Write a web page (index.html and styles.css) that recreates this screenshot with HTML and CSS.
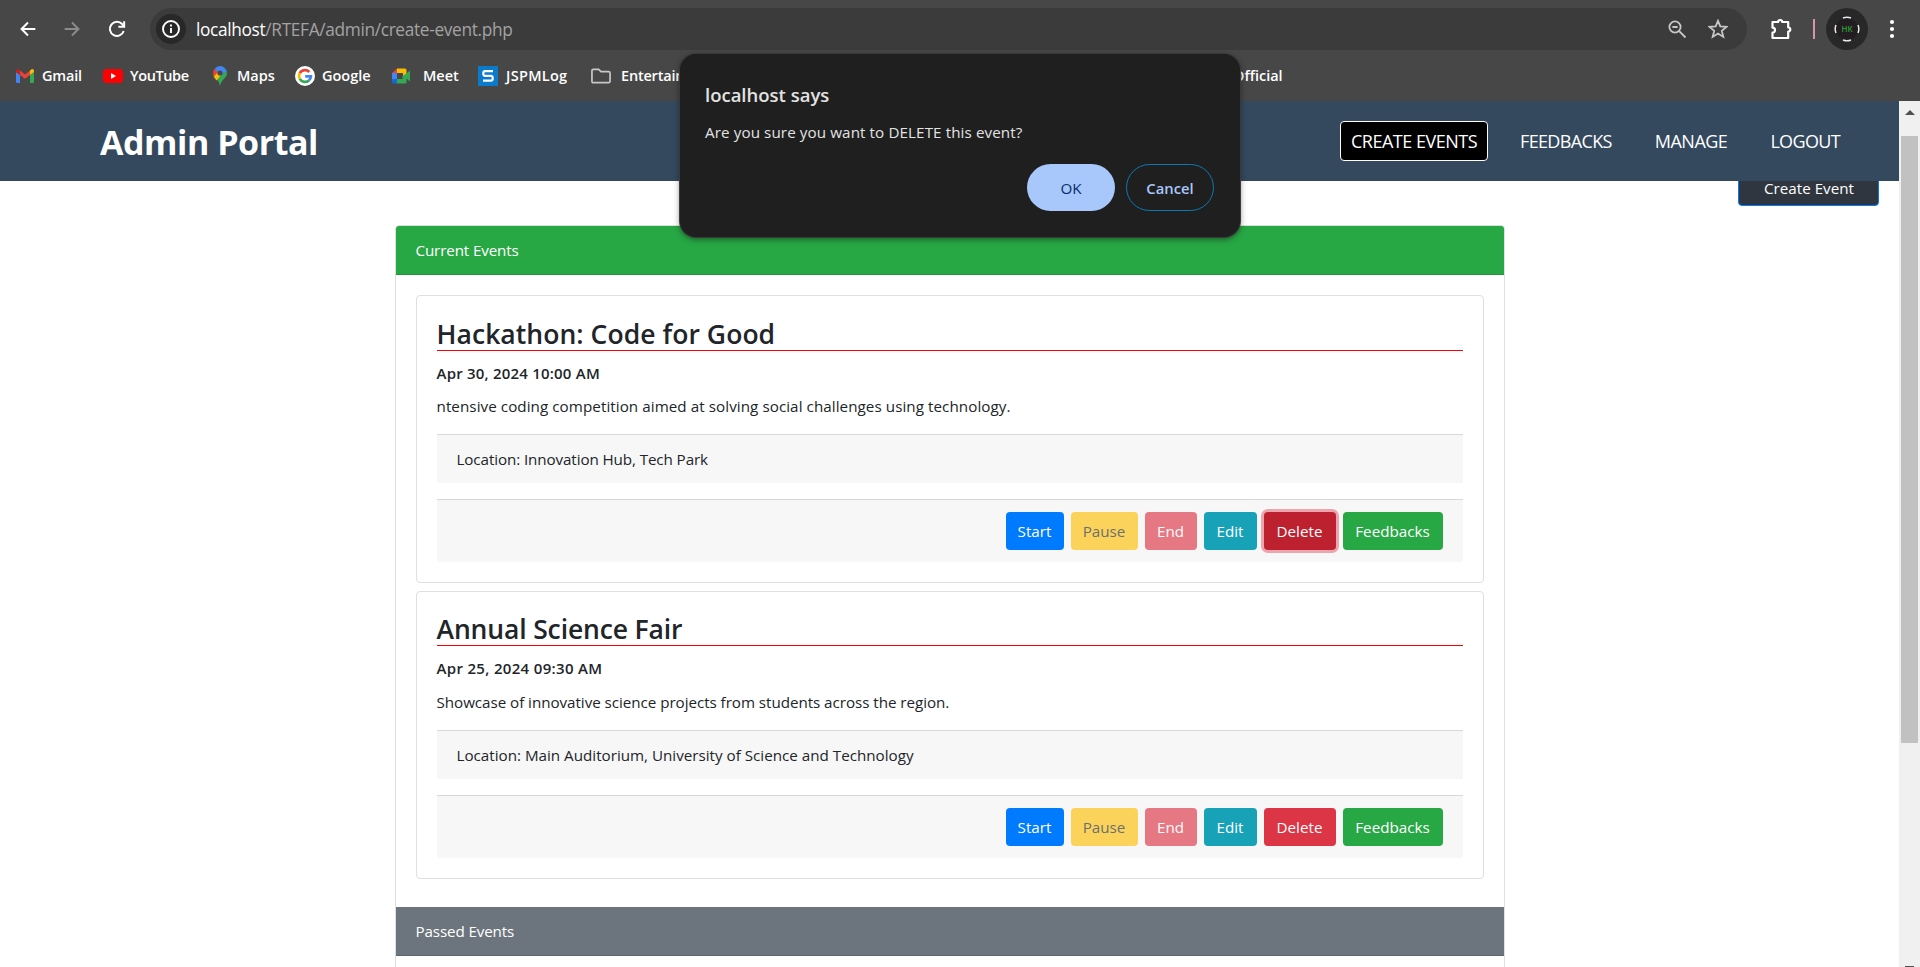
FILE: index.html
```html
<!DOCTYPE html>
<html lang="en">
<head>
<meta charset="utf-8">
<title>Admin Portal</title>
<link rel="stylesheet" href="styles.css">
</head>
<body>
<div class="browser">
  <div class="toolbar">
    <svg class="nav-icon back" viewBox="0 0 24 24"><path d="M20 12H5M12 5l-7 7 7 7"/></svg>
    <svg class="nav-icon forward" viewBox="0 0 24 24"><path d="M4 12h15M12 5l7 7-7 7"/></svg>
    <svg class="nav-icon reload" viewBox="0 0 24 24"><path d="M19.300 14.200A7.700 7.700 0 1 1 17.600 6.600L19.300 8.600"/><path d="M19.800 3.500v6h-6.300"/></svg>
    <div class="omnibox">
      <span class="info"><svg viewBox="0 0 20 20"><circle cx="10" cy="10" r="8"/><path d="M10 9v5M10 5.600v2"/></svg></span>
      <span class="url"><b>localhost</b>/RTEFA/admin/create-event.php</span>
      <svg class="omni-icon zoom-out" viewBox="0 0 20 20"><circle cx="8" cy="8" r="5.600"/><path d="M12.200 12.200L18.500 18.500M5.400 8h5.200"/></svg>
      <svg class="omni-icon star" viewBox="0 0 20 20"><path d="M10 1.800l2.300 5.600 6.200.5-4.700 4 1.500 6-5.300-3.300-5.300 3.300 1.500-6-4.700-4 6.200-.5z"/></svg>
    </div>
    <svg class="ext" viewBox="0 0 24 24"><path d="M3.500 5H9.200a2 2 0 0 1 4 0h6v5.500a2 2 0 0 1 0 4.200v6.300H3.500v-5.300a2.500 2.500 0 0 0 0-5z"/></svg>
    <i class="divider"></i>
    <span class="avatar">
      <svg class="avatar-ring" viewBox="0 0 26 26"><circle cx="13" cy="13" r="11" fill="#211d20" stroke="none"/><path d="M9 2Q13 .4 17 2M9 24Q13 25.600 17 24M2 9Q.4 13 2 17M24 9Q25.600 13 24 17"/></svg>
      <span class="avatar-text">HK</span>
    </span>
    <svg class="dots" viewBox="0 0 6 20"><circle cx="3" cy="3" r="2.100"/><circle cx="3" cy="10" r="2.100"/><circle cx="3" cy="17" r="2.100"/></svg>
  </div>
  <div class="bookmarks">
    <span class="bm gmail"><svg viewBox="0 0 20 20"><path fill="#4285f4" d="M1 6l4 3v8H2.300Q1 17 1 15.700z"/><path fill="#34a853" d="M15 9l4-3v9.700q0 1.300-1.300 1.300H15z"/><path fill="#ea4335" d="M5 9V4.600l5 3.800 5-3.800V9l-5 3.800z"/><path fill="#c5221f" d="M1 6V5q0-2 2-2l2 1.600V9z"/><path fill="#fbbc04" d="M19 6V5q0-2-2-2l-2 1.600V9z"/></svg><span>Gmail</span></span>
    <span class="bm youtube"><svg viewBox="0 0 20 20"><rect y="3" width="20" height="14" rx="3.500" fill="#f00"/><path fill="#fff" d="M8 7l5 3-5 3z"/></svg><span>YouTube</span></span>
    <span class="bm"><svg viewBox="0 0 20 20"><path fill="#34a853" d="M10 20Q9.600 16 6 12L14 2.400Q17 4 17 7.200C17 12 11.500 13 10 20z"/><path fill="#fbbc04" d="M3.500 9.500L10 3l3 3.500-6.500 8Q4.200 12 3.500 9.500z"/><path fill="#ea4335" d="M4.600 2.800L8 6 4 10.500Q2 6 4.600 2.800z"/><path fill="#4285f4" d="M4.600 2.800Q9-2 14 1.500 16 3 16.700 5.500L10 9z"/><circle cx="10" cy="7" r="2.600" fill="#474747"/></svg><span>Maps</span></span>
    <span class="bm"><svg viewBox="0 0 20 20"><circle cx="10" cy="10" r="10" fill="#fff"/><g fill="none" stroke-width="2.700"><path stroke="#ea4335" d="M4.800 7.200A5.900 5.900 0 0 1 14.300 6"/><path stroke="#fbbc04" d="M4.900 12.900A5.900 5.900 0 0 1 4.800 7.100"/><path stroke="#34a853" d="M4.800 12.800A5.900 5.900 0 0 0 13.900 14.400"/><path stroke="#4285f4" d="M10.200 10.400h5.700q-.1 2.600-2.100 4.100"/></g></svg><span>Google</span></span>
    <span class="bm meet"><svg viewBox="0 0 20 20"><path fill="#ea4335" d="M6 2.500V7H1z"/><path fill="#fbbc04" d="M6 2.500h8q1.500 0 1.500 1.500v5L12 11.500V7H6z"/><path fill="#4285f4" d="M1 7h5v6H1z"/><path fill="#1967d2" d="M1 13h5v4.500H2.500Q1 17.500 1 16z"/><path fill="#34a853" d="M6 13h5.500V10l4-2.500L19 4.500v11L15.500 12.500V16q0 1.500-1.500 1.500H6z"/></svg><span>Meet</span></span>
    <span class="bm jspm"><svg viewBox="0 0 20 20"><path fill="#0a7bcb" d="M0 0h20v20H0z"/><path fill="none" stroke="#fff" stroke-width="2.200" d="M15 5.200H7Q5.300 5.200 5.300 7.500T7 9.800h6q1.700 0 1.700 2.400T13 14.600H5"/></svg><span>JSPMLog</span></span>
    <span class="bm folder"><svg viewBox="0 0 21 20"><path fill="none" stroke="#c7c7c7" stroke-width="1.800" d="M1 4.500Q1 3 2.500 3H8l2.500 2.500h8Q20 5.500 20 7v8.500q0 1.500-1.500 1.500h-16Q1 17 1 15.500z"/></svg><span>Entertainment</span></span>
    <span class="bm"><span>Official</span></span>
  </div>
</div>

<div class="viewport">
  <div class="page">
    <header class="site-header">
      <h1>Admin Portal</h1>
      <nav>
        <a class="active">CREATE EVENTS</a>
        <a class="tight">FEEDBACKS</a>
        <a>MANAGE</a>
        <a class="tight">LOGOUT</a>
      </nav>
    </header>
    <div class="create-row"><button class="create">Create Event</button></div>
    <main class="card">
      <div class="card-header current">Current Events</div>
      <div class="card-body">
        <article class="event">
          <h3 class="roomy">Hackathon: Code for Good</h3>
          <h6>Apr 30, 2024 10:00 AM</h6>
          <p class="wide">ntensive coding competition aimed at solving social challenges using technology.</p>
          <div class="footer narrow">Location: Innovation Hub, Tech Park</div>
          <div class="footer actions">
            <button class="b start">Start</button>
            <button class="b pause">Pause</button>
            <button class="b end">End</button>
            <button class="b edit">Edit</button>
            <button class="b delete focused">Delete</button>
            <button class="b feedbacks">Feedbacks</button>
          </div>
        </article>
        <article class="event">
          <h3>Annual Science Fair</h3>
          <h6 class="roomy">Apr 25, 2024 09:30 AM</h6>
          <p class="snug">Showcase of innovative science projects from students across the region.</p>
          <div class="footer">Location: Main Auditorium, University of Science and Technology</div>
          <div class="footer actions">
            <button class="b start">Start</button>
            <button class="b pause">Pause</button>
            <button class="b end">End</button>
            <button class="b edit">Edit</button>
            <button class="b delete">Delete</button>
            <button class="b feedbacks">Feedbacks</button>
          </div>
        </article>
      </div>
      <div class="card-header passed">Passed Events</div>
    </main>
  </div>
  <div class="scrollbar"><i class="up"></i><i class="thumb"></i><i class="down"></i></div>
</div>

<div class="dialog">
  <h2>localhost says</h2>
  <p>Are you sure you want to DELETE this event?</p>
  <div class="dialog-actions"><button class="ok">OK</button><button class="cancel">Cancel</button></div>
</div>
</body>
</html>
```
FILE: styles.css
```css
* { box-sizing: border-box; }
html, body { height: 100%; }
body {
  margin: 0;
  overflow: hidden;
  display: flex;
  flex-direction: column;
  background: #fff;
  color: #212529;
  font: 400 15.2px/24px "Open Sans", "Noto Sans", sans-serif;
}
h1, h2, h3, h6, p { margin: 0; }
button { font: inherit; margin: 0; }

.browser { flex: none; height: 101px; background: #474747; color: #fff; }
.toolbar { display: flex; align-items: center; width: 1920px; height: 42px; margin-top: 8px; }
.nav-icon { width: 22px; height: 22px; fill: none; stroke: #fff; stroke-width: 2.2; }
.back { margin-left: 17px; }
.forward { margin-left: 22px; stroke: #8b8b8b; }
.reload { margin-left: 23px; margin-right: 22px; }
.omnibox {
  display: flex;
  align-items: center;
  width: 1597px;
  height: 42px;
  padding: 0 19px 0 6px;
  border-radius: 21px;
  background: #3b3b3b;
}
.info { display: flex; align-items: center; justify-content: center; width: 30px; height: 30px; border-radius: 50%; background: #282828; }
.info svg { width: 20px; height: 20px; fill: none; stroke: #fff; stroke-width: 1.9; }
.url { margin-left: 10px; padding-top: 2px; color: #a3a3a3; font-size: 17.3px; letter-spacing: -.34px; }
.url b { font-weight: 400; color: #fff; }
.omni-icon { width: 20px; height: 20px; fill: none; stroke: #c7c7c7; stroke-width: 1.8; }
.zoom-out { margin-left: auto; margin-right: 21px; }
.ext { width: 24px; height: 24px; margin-left: 22px; fill: none; stroke: #fff; stroke-width: 2.2; stroke-linejoin: round; }
.divider { width: 2px; height: 20px; margin-left: 20px; background: #d795a5; }
.avatar { display: grid; place-items: center; width: 42px; height: 42px; margin-left: 11px; border-radius: 50%; background: #282828; }
.avatar > * { grid-area: 1 / 1; }
.avatar-ring { width: 26px; height: 26px; fill: none; stroke: #e8e8e8; stroke-width: 1.5; }
.avatar-text { font-size: 8px; line-height: 10px; font-weight: 600; color: #2f9a35; }
.dots { width: 6px; height: 20px; margin-left: 21px; fill: #fff; }

.bookmarks {
  display: grid;
  grid-template-columns: 88px 107px 85px 96px 87px 113px 642px auto;
  align-items: center;
  height: 52px;
  padding-left: 15px;
  font-size: 14.5px;
  font-weight: 600;
}
.bm { display: flex; align-items: center; gap: 7px; height: 20px; }
.bm svg { width: 20px; height: 20px; }
.meet { gap: 12px; }
.gmail { letter-spacing: -.2px; }
.youtube { letter-spacing: -.4px; }
.jspm { gap: 8px; letter-spacing: .3px; }
.folder { gap: 10px; letter-spacing: -.2px; }

.viewport { flex: 1; min-height: 0; display: flex; }
.page { width: 1899px; overflow: hidden; }
.site-header {
  position: relative;
  z-index: 1;
  display: flex;
  align-items: center;
  justify-content: space-between;
  height: 80px;
  padding: 0 48px 0 100px;
  background: #34495e;
  color: #fff;
}
.site-header h1 { padding-top: 2px; font-size: 34px; line-height: 42px; font-weight: 700; letter-spacing: -.45px; }
nav { display: flex; gap: 21px; font-size: 18px; letter-spacing: -.5px; }
nav a { display: flex; align-items: center; height: 40px; padding: 0 10px; border: 1px solid transparent; border-radius: 4px; }
nav .active { border-color: #fff; background: #000; }
nav .tight { letter-spacing: -.65px; }

.create-row { display: flex; justify-content: flex-end; margin-top: -14px; padding-right: 20px; }
.create { width: 141px; height: 39px; padding: 2px 0 0 1px; border: 1px solid #007bff; border-radius: 4px; background: #2f3640; color: #fff; }

.card { width: 1110px; height: 900px; margin: 19px auto 0; border: 1px solid #dfdfdf; border-radius: 4px; }
.card-header { height: 49px; padding: 12px 20px; color: #fff; border-bottom: 1px solid rgba(0, 0, 0, .125); letter-spacing: -.13px; }
.current { background: #28a745; border-radius: 3px 3px 0 0; }
.passed { background: #6c757d; }
.card-body { padding: 20px; }
.event { margin-bottom: 8px; padding: 20px; border: 1px solid #dfdfdf; border-radius: 4px; }
.event h3 { margin-bottom: 10px; padding-top: 2.5px; border-bottom: 1px solid #f00; font-size: 26.5px; line-height: 31px; font-weight: 600; letter-spacing: -.14px; }
.event h3.roomy { letter-spacing: .06px; }
.event h6 { margin-bottom: 9.4px; font-size: 15px; line-height: 24px; font-weight: 600; letter-spacing: .21px; }
.event h6.roomy { letter-spacing: .33px; }
.event p { margin-bottom: 16px; }
.event .wide { letter-spacing: .065px; }
.event .snug { letter-spacing: -.045px; }
.footer { height: 49px; padding: 12px 20px; border-top: 1px solid #d8d8d8; background: #f7f7f7; }
.narrow { letter-spacing: -.1px; }
.actions { display: flex; justify-content: flex-end; gap: 7px; height: 63px; margin-top: 16px; border-radius: 0 0 3px 3px; }
.b { height: 38px; padding: 0; border: 0; border-radius: 4px; color: #fff; }
.start { width: 58px; background: #007bff; }
.pause { width: 67px; background: #ffc107; color: #212529; opacity: .65; }
.end { width: 52px; background: #dc3545; opacity: .65; }
.edit { width: 53px; background: #17a2b8; }
.delete { width: 72px; background: #dc3545; }
.feedbacks { width: 100px; background: #28a745; }
.focused { background: #bd2130; box-shadow: 0 0 0 3px rgba(225, 83, 97, .5); }

.scrollbar { width: 21px; background: #f0f0f0; display: flex; flex-direction: column; align-items: center; }
.up { margin-top: 9px; border: 5px solid transparent; border-top: 0; border-bottom-color: #505050; }
.thumb { width: 17px; height: 607px; margin-top: 21px; background: #c1c1c1; }
.down { width: 9px; height: 1px; margin-top: auto; background: #505050; }

.dialog {
  position: absolute;
  z-index: 5;
  left: 680px;
  top: 54px;
  width: 560px;
  height: 183px;
  padding: 28px 26px 26px 25px;
  border-radius: 16px;
  background: #1f1f1f;
  box-shadow: 0 0 0 1px #3a3a3a, 0 2px 6px rgba(0, 0, 0, .5);
  color: #e3e3e3;
}
.dialog h2 { font-size: 18.5px; line-height: 26px; font-weight: 600; }
.dialog p { margin-top: 12px; letter-spacing: .1px; }
.dialog-actions { display: flex; justify-content: flex-end; gap: 11px; margin-top: 20px; }
.dialog button { width: 88px; height: 47px; border-radius: 24px; font-weight: 600; font-size: 14.8px; }
.ok { border: 0; background: #a8c7fa; color: #062e6f; }
.cancel { border: 1px solid #0b7ab5; background: none; color: #a8c7fa; }
.dialog .ok { font-weight: 400; font-size: 15.2px; }
```
